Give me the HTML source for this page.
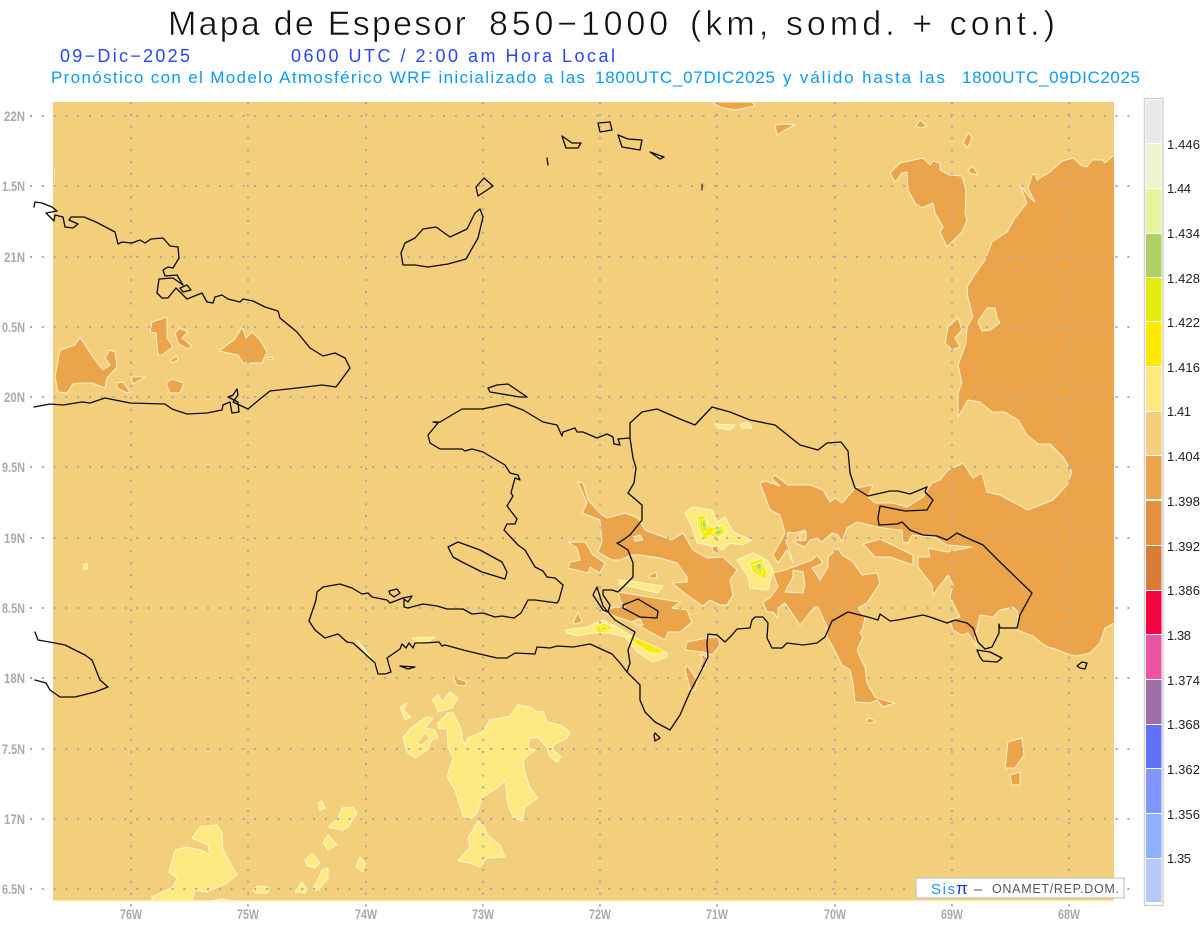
<!DOCTYPE html>
<html><head><meta charset="utf-8"><title>Mapa de Espesor</title>
<style>
html,body{margin:0;padding:0;background:#fff;width:1200px;height:927px;overflow:hidden}
svg{display:block;font-family:"Liberation Sans",sans-serif}
.o polygon{fill:#eba44a;stroke:#fdf0cc;stroke-width:1;stroke-linejoin:round}
.b polygon{fill:#f3cf7c;stroke:#fdf0cc;stroke-width:1;stroke-linejoin:round}
.y polygon{fill:#ffea82;stroke:#fff6cf;stroke-width:1;stroke-linejoin:round}
.s polygon{fill:#fdea00;stroke:#fff6cf;stroke-width:.8}
.l polygon{fill:#e2ee10;stroke:#fff6cf;stroke-width:.6}
.g polygon{fill:#acd062;stroke:#f3f6c0;stroke-width:.5}
.c polyline,.c polygon{fill:none;stroke:#0a0a0a;stroke-width:1.3;stroke-linejoin:round;stroke-linecap:round}
.ax{font-weight:bold;font-size:14px;fill:#aaa}
.cb{font-size:13px;fill:#222}
.t{font-size:34px;fill:#111;stroke:#fff;stroke-width:.55px}
</style></head><body>
<svg width="1200" height="927" viewBox="0 0 1200 927" xmlns="http://www.w3.org/2000/svg">
<rect width="1200" height="927" fill="#fff"/>
<text class="t" x="168" y="35" textLength="298">Mapa de Espesor</text>
<text class="t" x="489" y="35" textLength="179">850−1000</text>
<text class="t" x="690" y="35" textLength="365">(km, somd. + cont.)</text>
<text x="60" y="62" font-size="18" fill="#2a45ff" textLength="130">09−Dic−2025</text>
<text x="291" y="62" font-size="18" fill="#2a45ff" textLength="324">0600 UTC / 2:00 am Hora Local</text>
<g font-size="17" fill="#0a9aff">
<text x="51" y="83" textLength="534">Pronóstico con el Modelo Atmosférico WRF inicializado a las</text>
<text x="595" y="83" textLength="180">1800UTC_07DIC2025</text>
<text x="783" y="83" textLength="162">y válido hasta las</text>
<text x="962" y="83" textLength="178">1800UTC_09DIC2025</text>
</g>

<clipPath id="m"><rect x="53" y="102" width="1061" height="799"/></clipPath>
<rect x="53" y="102" width="1061" height="799" fill="#f3cf7c"/>
<rect x="53" y="900" width="1061" height="1.5" fill="#fdeeb5"/>
<g clip-path="url(#m)">
<g class="o">
<polygon points="1114,155 1105,163 1102,160 1092,160 1087,167 1082,166 1073,158 1062,161 1050,172 1037,180 1035,174 1032,175 1028,188 1035,202 1030,198 1020,185 1027,203 1015,218 1007,232 992,242 985,260 973,277 967,287 968,298 973,317 967,327 966,343 958,365 962,383 958,393 958,417 968,400 980,402 992,412 1005,412 1018,420 1027,435 1038,444 1050,444 1063,457 1072,472 1067,485 1053,500 1028,510 1013,502 1000,495 987,492 982,473 973,478 963,463 957,466 948,470 940,480 932,483 923,497 907,507 893,503 875,503 868,497 873,485 855,488 842,503 835,498 830,502 823,490 810,485 788,485 775,475 772,479 780,486 765,481 760,483 770,510 780,515 785,533 773,555 778,563 787,550 793,562 786,541 788,532 795,533 805,530 806,537 793,542 805,547 810,540 817,538 822,542 832,533 838,535 842,542 847,528 857,522 877,527 897,530 902,530 903,542 908,543 912,535 935,537 947,545 972,547 947,552 928,548 930,557 918,557 918,567 932,585 933,595 948,575 953,585 950,597 960,617 950,620 953,630 962,635 968,633 977,647 975,637 980,615 993,617 1000,610 1013,607 1018,612 1017,630 1033,636 1040,642 1048,647 1058,650 1070,655 1077,656 1090,653 1100,643 1105,628 1114,623 1120,623 1120,155"/>
<polygon points="773,573 785,570 793,567 812,560 817,555 823,563 812,568 820,580 828,567 828,557 838,548 842,555 853,562 862,575 877,573 880,583 867,603 858,608 865,617 863,628 860,633 863,637 857,650 860,657 865,667 867,683 875,697 883,700 895,703 883,707 877,700 870,703 855,702 853,683 850,670 842,665 833,647 827,637 827,627 818,607 815,607 812,610 800,625 785,603 778,608 778,618 773,612 767,612 763,602 770,598 778,587"/>
<polygon points="863,544 880,539 913,555 913,565 890,557 875,557"/>
<polygon points="578,482 583,483 588,500 602,515 607,518 625,513 638,518 645,530 650,532 672,540 683,533 693,550 707,558 723,557 737,570 730,580 733,595 727,605 720,605 710,600 703,606 687,595 672,583 687,582 687,577 677,563 660,558 640,555 632,555 620,560 612,560 598,552 602,542 600,520 582,513 587,503"/>
<polygon points="568,542 585,542 593,555 605,563 600,573 590,567 588,573 568,568 570,562 580,560 577,548"/>
<polygon points="618,592 655,598 680,602 672,608 687,610 692,622 680,632 668,632 665,640 650,632 635,623 620,618 603,612 615,607 625,608 620,600"/>
<polygon points="573,623 578,612 582,622 575,624"/>
<polygon points="687,642 707,638 718,637 720,645 712,655 703,652 685,650"/>
<polygon points="700,654 707,657 705,668 699,668 703,660"/>
<polygon points="687,665 697,680 695,690 690,688 685,670"/>
<polygon points="712,102 752,102 755,106 735,110 720,107"/>
<polygon points="775,125 785,124 795,125 785,130 777,135"/>
<polygon points="916,126 920,120 927,126 920,128"/>
<polygon points="963,143 968,133 972,137 968,148"/>
<polygon points="968,170 973,166 978,175 970,173"/>
<polygon points="890,173 900,163 923,158 930,165 933,161 940,163 940,170 950,175 962,176 966,190 965,213 967,220 962,232 947,247 940,232 943,227 935,213 933,203 922,208 915,203 908,190 907,172 902,173 895,182"/>
<polygon points="948,327 958,318 962,330 955,338 960,347 952,350 945,343"/>
<polygon points="55,377 60,350 75,345 80,337 87,348 93,357 103,370 110,365 105,358 110,350 115,352 117,367 107,378 105,388 92,383 80,383 73,384 67,393 58,392"/>
<polygon points="117,383 123,382 130,392 127,393 117,388"/>
<polygon points="131,377 145,377 133,384"/>
<polygon points="166,383 172,379 184,383 180,393 170,393"/>
<polygon points="170,360 177,356 178,360 172,363"/>
<polygon points="150,332 152,322 167,317 167,338 173,347 162,355 158,355 156,333"/>
<polygon points="175,333 180,328 188,332 182,338 192,346 187,349 178,343"/>
<polygon points="219,351 235,339 242,327 246,338 252,332 260,340 267,352 262,363 243,363 238,355"/>
<polygon points="267,358 272,357 273,359 268,360"/>
<polygon points="453,677 467,682 465,686 457,685"/>
<polygon points="1008,742 1022,738 1024,755 1015,768 1005,768"/>
<polygon points="1010,775 1020,772 1020,785 1012,785"/>
<polygon points="866,720 870,718 876,722 868,723"/>
<polygon points="50,170 54,168 54,185 51,183"/>
<polygon points="650,575 656,572 657,578 649,578"/>
</g>
<g class="b">
<polygon points="978,322 987,308 995,308 997,318 1000,323 990,330 982,331"/>
<polygon points="793,570 803,572 805,585 803,593 785,592 793,577"/>
<polygon points="633,537 640,535 643,540 635,541"/>
<polygon points="633,621 640,619 643,625 636,625"/>
<polygon points="800,533 806,532 806,540 800,541"/>
</g>
<g class="y">
<polygon points="438,723 448,713 453,713 458,723 462,732 462,738 465,745 468,738 482,732 490,720 510,716 518,705 530,707 537,712 543,711 547,722 560,725 570,732 567,738 553,745 553,750 561,757 557,762 550,757 547,748 538,737 530,738 528,748 535,750 523,760 525,773 530,788 538,798 525,807 522,821 513,817 508,805 505,780 497,788 483,797 477,813 472,818 463,816 459,803 455,790 447,777 453,758 448,747 447,729 438,728"/>
<polygon points="403,738 412,727 427,717 433,718 425,728 435,730 438,738 432,740 427,750 415,758 407,752"/>
<polygon points="432,700 438,695 442,702 450,692 458,698 452,708 438,712 435,703"/>
<polygon points="400,707 407,703 403,710 411,717 405,720"/>
<polygon points="478,821 485,828 487,835 500,845 505,857 487,858 480,867 470,863 458,861 470,847 468,838"/>
<polygon points="152,897 173,887 177,878 169,872 175,850 187,847 200,850 210,855 208,845 192,838 200,827 217,825 222,833 223,850 237,875 227,883 207,892 195,890 192,901 152,901"/>
<polygon points="210,901 222,899 235,901"/>
<polygon points="253,890 258,886 268,887 268,893 255,893"/>
<polygon points="295,892 302,882 307,890 305,893"/>
<polygon points="305,860 312,853 320,863 315,868 307,866"/>
<polygon points="313,890 322,870 328,868 328,878 318,890"/>
<polygon points="328,827 338,818 342,808 353,807 357,813 348,827 342,830"/>
<polygon points="323,843 328,835 337,845 328,850"/>
<polygon points="318,803 322,801 325,808 320,810"/>
<polygon points="356,867 360,857 365,863 363,872"/>
<polygon points="357,640 375,663 377,667 360,645"/>
<polygon points="412,638 435,637 427,643 418,644"/>
<polygon points="685,513 692,507 712,510 717,522 725,517 733,532 752,540 743,545 730,543 723,550 708,545 697,543 692,527"/>
<polygon points="737,560 753,553 767,560 773,570 768,590 750,588 748,577"/>
<polygon points="565,630 587,627 603,620 617,627 630,635 667,653 667,657 653,662 637,652 625,637 610,633 593,633 577,636 567,633"/>
<polygon points="619,580 637,582 663,586 658,593 633,587 620,585"/>
<polygon points="715,424 735,425 730,430 718,428"/>
<polygon points="740,424 748,422 752,428 742,428"/>
<polygon points="83,565 87,563 88,568 84,570"/>
</g>
<g class="b"><polygon points="417,743 425,733 430,738 422,745"/></g>
<g class="o"><polygon points="712,547 718,546 718,552 713,552"/></g>
<g class="s">
<polygon points="697,517 705,515 708,525 713,528 722,525 727,532 718,539 710,535 705,540 698,527"/>
<polygon points="749,563 762,558 767,572 765,580 753,572"/>
<polygon points="595,627 605,623 613,628 605,633 597,632"/>
<polygon points="627,635 640,640 662,650 663,653 650,653 635,643"/>
</g>
<g class="l">
<polygon points="699,520 706,519 708,529 705,532 700,527"/>
<polygon points="712,532 720,527 725,532 718,537"/>
<polygon points="753,565 762,562 763,570 761,575 757,570"/>
<polygon points="600,627 606,626 608,629 603,631"/>
</g>
<g class="g">
<polygon points="702,522 705,521 706,527 703,527"/>
<polygon points="715,532 720,530 722,532 718,535"/>
<polygon points="756,565 761,563 761,569 758,569"/>
</g>
</g>

<g fill="none" stroke="#a8a8a8" stroke-width="2" stroke-dasharray="2 9.8">
<path d="M131 102V908M248 102V908M366 102V908M483 102V908M600 102V908M717 102V908M835 102V908M952 102V908M1069 102V908"/>
<path d="M30 116H1134M30 186H1134M30 257H1134M30 327H1134M30 397H1134M30 467H1134M30 538H1134M30 608H1134M30 678H1134M30 749H1134M30 819H1134M30 889H1134"/>
</g>

<g class="c">
<polyline points="34,207 35,202 42,203 52,207 57,211 46,213 54,221 55,215 63,217 65,227 73,228 78,224 69,220 71,217 84,217 96,222 115,232 118,244 122,242 132,243 140,240 145,243 151,239 163,238 170,246 178,247 179,258 173,268 168,267 163,270 165,276 177,275 183,285 173,278 159,279 157,293 162,298 168,298 176,288 187,299 202,293 207,302 213,303 215,297 222,295 228,299 240,302 243,299 253,301 265,307 278,311 280,318 297,332 310,348 323,356 335,353 345,358 350,368 336,387 322,385 297,388 270,391 260,399 248,409 233,402 238,395 237,389 233,395 228,397 238,402 239,412 232,413 230,402 223,405 222,410 207,413 187,414 172,409 165,404 130,403 105,398 90,403 82,402 63,405 50,404 34,407"/>
<polygon points="180,288 187,285 191,290 183,292"/>
<polyline points="35,632 38,640 55,643 65,645 85,655 92,660 100,680 108,687 95,692 75,697 60,697 50,690 46,683 35,680"/>
<polygon points="401,253 405,243 415,238 423,229 436,227 450,237 467,229 475,213 480,209 483,217 478,238 466,259 448,264 428,267 415,265 403,265"/>
<polygon points="484,178 493,186 478,196 476,187"/>
<polygon points="562,136 572,143 581,143 578,148 566,148"/>
<polyline points="547,158 548,165"/>
<polygon points="598,123 610,122 612,130 600,132"/>
<polygon points="618,135 628,139 642,140 640,150 622,147"/>
<polygon points="650,152 664,157 660,159"/>
<polyline points="702,184 702,190" style="stroke-width:1"/>
<polygon points="433,422 440,422 462,409 482,409 507,404 523,410 543,422 557,425 562,436 563,432 575,428 577,432 583,432 597,438 607,434 613,437 614,444 620,445 618,439 630,438 633,458 636,468 634,483 628,493 642,505 642,520 630,535 620,542 617,543 628,550 633,563 633,577 620,590 618,592 612,590 603,590 603,595 610,605 608,612 603,606 597,587 593,595 603,610 608,612 615,620 635,632 628,650 630,663 627,672 620,663 612,654 590,644 573,647 557,646 550,648 537,647 535,654 515,653 507,658 497,658 467,651 445,645 442,646 439,642 423,643 415,643 413,648 409,643 406,648 402,644 400,649 387,658 391,672 385,674 378,674 375,663 363,652 353,643 347,642 338,634 325,638 315,630 309,621 316,600 317,592 323,587 340,584 352,588 362,594 368,593 372,597 387,600 390,603 403,598 412,596 408,602 404,599 404,607 408,608 423,604 437,606 447,609 463,609 472,614 483,613 495,617 502,616 514,618 521,613 528,600 535,600 557,603 559,600 563,585 555,578 547,577 543,571 535,567 525,550 518,545 504,530 507,524 515,524 517,519 507,506 513,496 511,493 515,478 520,480 518,475 510,473 505,465 483,452 472,449 465,451 462,449 440,449 430,443 428,435 438,423"/>
<polygon points="448,547 458,542 480,550 502,562 507,572 505,579 482,572 462,562 453,557"/>
<polygon points="488,388 497,385 508,384 527,397 520,397 490,392"/>
<polygon points="389,591 397,589 400,593 394,597 390,594"/>
<polygon points="400,666 415,667 408,669"/>
<polygon points="623,605 638,599 658,611 657,618 640,617 623,608"/>
<polyline points="630,438 630,423 642,412 657,409 680,419 695,425 712,407 730,412 750,420 775,425 800,445 818,450 827,443 841,442 848,451 850,473 855,488 868,496 890,491 898,491 910,494 927,487 925,492 933,500 927,510 905,511 880,506 878,518 879,525 897,524 902,522 910,530 923,535 937,536 947,540 957,533 965,537 983,545 1000,562 1032,593 1020,615 1017,628 1000,628 999,624 999,633 992,647 985,649 978,642 973,628 967,623 955,620 947,623 930,617 923,615 898,620 890,621 880,614 878,620 868,617 848,612 832,621 825,637 817,643 803,645 787,643 782,648 772,648 767,638 768,623 763,617 755,617 752,620 750,628 737,629 732,635 725,642 717,635 708,634 707,643 708,657 698,677 690,692 680,715 670,730 655,722 645,712 640,700 640,685 627,672"/>
<polygon points="655,733 660,738 655,741 654,735"/>
<polygon points="977,650 990,652 1002,658 997,662 983,661 980,657"/>
<polygon points="1077,666 1082,662 1087,663 1085,669 1080,668"/>
</g>

<g class="ax" text-anchor="end">
<text x="25" y="121" textLength="21" lengthAdjust="spacingAndGlyphs">22N</text>
<text x="25" y="191" textLength="23" lengthAdjust="spacingAndGlyphs">1.5N</text>
<text x="25" y="262" textLength="21" lengthAdjust="spacingAndGlyphs">21N</text>
<text x="25" y="332" textLength="23" lengthAdjust="spacingAndGlyphs">0.5N</text>
<text x="25" y="402" textLength="21" lengthAdjust="spacingAndGlyphs">20N</text>
<text x="25" y="472" textLength="23" lengthAdjust="spacingAndGlyphs">9.5N</text>
<text x="25" y="543" textLength="21" lengthAdjust="spacingAndGlyphs">19N</text>
<text x="25" y="613" textLength="23" lengthAdjust="spacingAndGlyphs">8.5N</text>
<text x="25" y="683" textLength="21" lengthAdjust="spacingAndGlyphs">18N</text>
<text x="25" y="754" textLength="23" lengthAdjust="spacingAndGlyphs">7.5N</text>
<text x="25" y="824" textLength="21" lengthAdjust="spacingAndGlyphs">17N</text>
<text x="25" y="894" textLength="23" lengthAdjust="spacingAndGlyphs">6.5N</text>
</g>
<g class="ax">
<text x="120" y="919" textLength="22" lengthAdjust="spacingAndGlyphs">76W</text>
<text x="237" y="919" textLength="22" lengthAdjust="spacingAndGlyphs">75W</text>
<text x="355" y="919" textLength="22" lengthAdjust="spacingAndGlyphs">74W</text>
<text x="472" y="919" textLength="22" lengthAdjust="spacingAndGlyphs">73W</text>
<text x="589" y="919" textLength="22" lengthAdjust="spacingAndGlyphs">72W</text>
<text x="706" y="919" textLength="22" lengthAdjust="spacingAndGlyphs">71W</text>
<text x="824" y="919" textLength="22" lengthAdjust="spacingAndGlyphs">70W</text>
<text x="941" y="919" textLength="22" lengthAdjust="spacingAndGlyphs">69W</text>
<text x="1058" y="919" textLength="22" lengthAdjust="spacingAndGlyphs">68W</text>
</g>

<rect x="916" y="878" width="208" height="20" fill="#fff" stroke="#bbb" stroke-width="1"/>
<text x="931" y="894" font-size="15" fill="#1e90ff" textLength="24">Sis</text>
<text x="956" y="894" font-size="17" fill="#2233dd">π</text>
<text x="974" y="894" font-size="15" fill="#555">–</text>
<text x="992" y="893" font-size="12.5" fill="#555" textLength="127">ONAMET/REP.DOM.</text>

<rect x="1144.5" y="98.5" width="18.5" height="807" fill="#fff" stroke="#d2d2d2" stroke-width="1.5"/>
<g>
<rect x="1146" y="100" width="15.5" height="43" fill="#e9e9e9"/>
<rect x="1146" y="144" width="15.5" height="44" fill="#eff4d0"/>
<rect x="1146" y="189" width="15.5" height="44" fill="#e6f49f"/>
<rect x="1146" y="234" width="15.5" height="43" fill="#acd062"/>
<rect x="1146" y="278" width="15.5" height="43" fill="#e2ee10"/>
<rect x="1146" y="322" width="15.5" height="44" fill="#fdea00"/>
<rect x="1146" y="367" width="15.5" height="44" fill="#ffe97f"/>
<rect x="1146" y="412" width="15.5" height="43" fill="#f3cf7c"/>
<rect x="1146" y="456" width="15.5" height="43" fill="#eba44a"/>
<rect x="1146" y="501" width="15.5" height="44" fill="#e68f3f"/>
<rect x="1146" y="546" width="15.5" height="44" fill="#d87c3a"/>
<rect x="1146" y="591" width="15.5" height="43" fill="#f3053f"/>
<rect x="1146" y="635" width="15.5" height="44" fill="#ec55a5"/>
<rect x="1146" y="680" width="15.5" height="44" fill="#9a6fa8"/>
<rect x="1146" y="725" width="15.5" height="43" fill="#6371f8"/>
<rect x="1146" y="769" width="15.5" height="44" fill="#8095ff"/>
<rect x="1146" y="814" width="15.5" height="44" fill="#8fb0ff"/>
<rect x="1146" y="859" width="15.5" height="43" fill="#b8c8fd"/>
</g>
<g class="cb">
<text x="1167" y="149" textLength="33">1.446</text>
<text x="1167" y="193" textLength="24">1.44</text>
<text x="1167" y="238" textLength="33">1.434</text>
<text x="1167" y="283" textLength="33">1.428</text>
<text x="1167" y="327" textLength="33">1.422</text>
<text x="1167" y="372" textLength="33">1.416</text>
<text x="1167" y="416" textLength="24">1.41</text>
<text x="1167" y="461" textLength="33">1.404</text>
<text x="1167" y="506" textLength="33">1.398</text>
<text x="1167" y="551" textLength="33">1.392</text>
<text x="1167" y="595" textLength="33">1.386</text>
<text x="1167" y="640" textLength="24">1.38</text>
<text x="1167" y="685" textLength="33">1.374</text>
<text x="1167" y="729" textLength="33">1.368</text>
<text x="1167" y="774" textLength="33">1.362</text>
<text x="1167" y="819" textLength="33">1.356</text>
<text x="1167" y="863" textLength="24">1.35</text>
</g>
</svg>
</body></html>
